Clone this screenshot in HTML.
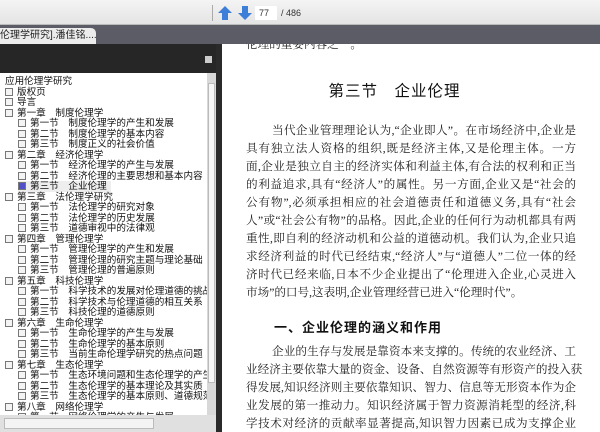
<!DOCTYPE html>
<html><head><meta charset="utf-8"><style>
*{margin:0;padding:0;box-sizing:border-box}
body{width:600px;height:432px;overflow:hidden;position:relative;background:#fff;font-family:"Liberation Sans","Noto Sans CJK SC",sans-serif}
.tb{position:absolute;left:0;top:0;width:600px;height:25px;background:linear-gradient(#f4f4f4,#e4e4e4);border-bottom:1px solid #bbb}
.tabbar{position:absolute;left:0;top:25px;width:600px;height:19px;background:#5c5c66}
.tab{position:absolute;left:0;top:3px;width:96px;height:16px;background:#ececec;border-radius:0 5px 0 0;font-size:10px;line-height:16px;color:#222;white-space:nowrap;overflow:hidden;padding-left:0}
.ph{position:absolute;left:0;top:44px;width:218px;height:29px;background:#262626}
.side{position:absolute;left:0;top:73px;width:207px;height:342px;background:#fff;overflow:hidden}
.vs{position:absolute;left:207px;top:73px;width:9px;height:342px;background:#d8d8d8}
.div{position:absolute;left:216px;top:44px;width:6px;height:388px;background:#2a2a2a}
.hs{position:absolute;left:0;top:415px;width:216px;height:17px;background:#e0e0e0}
.r{position:absolute;font-size:9.6px;line-height:11px;color:#111;white-space:nowrap}
.cb{display:inline-block;width:8px;height:8px;border:1px solid #777;background:#f4f4f4;vertical-align:-1px;margin-right:4px}
.doc{position:absolute;left:222px;top:44px;width:378px;height:388px;background:#fff;overflow:hidden}
.l{position:absolute;left:24px;width:330px;font-family:"Liberation Serif","Noto Serif CJK SC",serif;font-size:11.6px;line-height:16px;color:#222;text-align:justify;text-align-last:justify;white-space:nowrap}
</style></head><body>
<div class="tb">
 <div style="position:absolute;left:212px;top:5px;width:1px;height:16px;background:#aaa"></div>
 <svg style="position:absolute;left:217px;top:5px" width="16" height="16"><path d="M8 1 L15 8 L11 8 L11 15 L5 15 L5 8 L1 8Z" fill="#3d7ed8"/></svg>
 <svg style="position:absolute;left:237px;top:5px" width="16" height="16"><path d="M8 15 L15 8 L11 8 L11 1 L5 1 L5 8 L1 8Z" fill="#3d7ed8"/></svg>
 <div style="position:absolute;left:255px;top:6px;width:22px;height:14px;background:#fff;font-size:9px;line-height:14px;padding-left:4px;color:#333">77</div>
 <div style="position:absolute;left:281px;top:6px;font-size:9px;line-height:14px;color:#333">/ 486</div>
</div>
<div class="tabbar"><div class="tab">伦理学研究].潘佳铭.... <b style="margin-left:6px">×</b></div></div>
<div class="ph"><div style="position:absolute;left:205px;top:12px;width:7px;height:7px;background:#ccc"></div></div>
<div class="side">
<div class="r" style="left:5px;top:3px">应用伦理学研究</div>
<div class="r" style="left:5px;top:14px"><span class="cb"></span>版权页</div>
<div class="r" style="left:5px;top:24px"><span class="cb"></span>导言</div>
<div class="r" style="left:5px;top:35px"><span class="cb"></span>第一章　制度伦理学</div>
<div class="r" style="left:18px;top:45px"><span class="cb"></span>第一节　制度伦理学的产生和发展</div>
<div class="r" style="left:18px;top:56px"><span class="cb"></span>第二节　制度伦理学的基本内容</div>
<div class="r" style="left:18px;top:66px"><span class="cb"></span>第三节　制度正义的社会价值</div>
<div class="r" style="left:5px;top:77px"><span class="cb"></span>第二章　经济伦理学</div>
<div class="r" style="left:18px;top:87px"><span class="cb"></span>第一节　经济伦理学的产生与发展</div>
<div class="r" style="left:18px;top:98px"><span class="cb"></span>第二节　经济伦理的主要思想和基本内容</div>
<div class="r" style="left:18px;top:108px;background:#eee;padding-right:4px"><span class="cb" style="background:#5050c8"></span>第三节　企业伦理</div>
<div class="r" style="left:5px;top:119px"><span class="cb"></span>第三章　法伦理学研究</div>
<div class="r" style="left:18px;top:129px"><span class="cb"></span>第一节　法伦理学的研究对象</div>
<div class="r" style="left:18px;top:140px"><span class="cb"></span>第二节　法伦理学的历史发展</div>
<div class="r" style="left:18px;top:150px"><span class="cb"></span>第三节　道德审视中的法律观</div>
<div class="r" style="left:5px;top:161px"><span class="cb"></span>第四章　管理伦理学</div>
<div class="r" style="left:18px;top:171px"><span class="cb"></span>第一节　管理伦理学的产生和发展</div>
<div class="r" style="left:18px;top:182px"><span class="cb"></span>第二节　管理伦理的研究主题与理论基础</div>
<div class="r" style="left:18px;top:192px"><span class="cb"></span>第三节　管理伦理的普遍原则</div>
<div class="r" style="left:5px;top:203px"><span class="cb"></span>第五章　科技伦理学</div>
<div class="r" style="left:18px;top:213px"><span class="cb"></span>第一节　科学技术的发展对伦理道德的挑战</div>
<div class="r" style="left:18px;top:224px"><span class="cb"></span>第二节　科学技术与伦理道德的相互关系</div>
<div class="r" style="left:18px;top:234px"><span class="cb"></span>第三节　科技伦理的道德原则</div>
<div class="r" style="left:5px;top:245px"><span class="cb"></span>第六章　生命伦理学</div>
<div class="r" style="left:18px;top:255px"><span class="cb"></span>第一节　生命伦理学的产生与发展</div>
<div class="r" style="left:18px;top:266px"><span class="cb"></span>第二节　生命伦理学的基本原则</div>
<div class="r" style="left:18px;top:276px"><span class="cb"></span>第三节　当前生命伦理学研究的热点问题</div>
<div class="r" style="left:5px;top:287px"><span class="cb"></span>第七章　生态伦理学</div>
<div class="r" style="left:18px;top:297px"><span class="cb"></span>第一节　生态环境问题和生态伦理学的产生</div>
<div class="r" style="left:18px;top:308px"><span class="cb"></span>第二节　生态伦理学的基本理论及其实质</div>
<div class="r" style="left:18px;top:318px"><span class="cb"></span>第三节　生态伦理学的基本原则、道德规范与</div>
<div class="r" style="left:5px;top:329px"><span class="cb"></span>第八章　网络伦理学</div>
<div class="r" style="left:18px;top:339px"><span class="cb"></span>第一节　网络伦理学的产生与发展</div>
</div>
<div class="vs"><div style="position:absolute;left:1px;top:10px;width:7px;height:300px;background:#f6f6f6;border:1px solid #bbb"></div></div>
<div class="hs"><div style="position:absolute;left:4px;top:3px;width:150px;height:11px;background:#f4f4f4;border:1px solid #bbb"></div></div>
<div class="div"></div>
<div class="doc">
<div class="l" style="top:-7px;text-align:left;text-align-last:left">伦理的重要内容之一。</div>
<div style="position:absolute;left:0;width:345px;top:35px;text-align:center;font-family:'Liberation Sans','Noto Sans CJK SC',sans-serif;font-size:15.5px;color:#111;letter-spacing:1px">第三节　企业伦理</div>
<div class="l" style="top:79px;padding-left:26px">当代企业管理理论认为,“企业即人”。在市场经济中,企业是</div>
<div class="l" style="top:97px">具有独立法人资格的组织,既是经济主体,又是伦理主体。一方</div>
<div class="l" style="top:115px">面,企业是独立自主的经济实体和利益主体,有合法的权利和正当</div>
<div class="l" style="top:133px">的利益追求,具有“经济人”的属性。另一方面,企业又是“社会的</div>
<div class="l" style="top:151px">公有物”,必须承担相应的社会道德责任和道德义务,具有“社会</div>
<div class="l" style="top:169px">人”或“社会公有物”的品格。因此,企业的任何行为动机都具有两</div>
<div class="l" style="top:187px">重性,即自利的经济动机和公益的道德动机。我们认为,企业只追</div>
<div class="l" style="top:205px">求经济利益的时代已经结束,“经济人”与“道德人”二位一体的经</div>
<div class="l" style="top:223px">济时代已经来临,日本不少企业提出了“伦理进入企业,心灵进入</div>
<div class="l" style="top:241px;text-align:left;text-align-last:left">市场”的口号,这表明,企业管理经营已进入“伦理时代”。</div>
<div style="position:absolute;left:52px;top:273px;font-family:'Liberation Sans','Noto Sans CJK SC',sans-serif;font-weight:bold;font-size:13px;color:#111;letter-spacing:1px">一、企业伦理的涵义和作用</div>
<div class="l" style="top:300px;padding-left:26px">企业的生存与发展是靠资本来支撑的。传统的农业经济、工</div>
<div class="l" style="top:318px">业经济主要依靠大量的资金、设备、自然资源等有形资产的投入获</div>
<div class="l" style="top:336px">得发展,知识经济则主要依靠知识、智力、信息等无形资本作为企</div>
<div class="l" style="top:354px">业发展的第一推动力。知识经济属于智力资源消耗型的经济,科</div>
<div class="l" style="top:372px">学技术对经济的贡献率显著提高,知识智力因素已成为支撑企业</div>
</div>
</body></html>
